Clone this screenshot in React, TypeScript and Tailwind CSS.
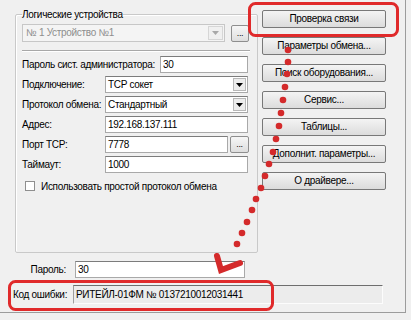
import React from 'react';

const dots: [number, number][] = [
  [288, 50], [288, 62], [287, 74], [285, 87], [283, 100], [281, 113], [279, 126],
  [276, 139], [273, 152], [269, 164], [265, 176], [261, 188], [256, 199], [252, 210],
  [247, 222], [242, 233], [237, 244],
];

const buttons = [
  'Проверка связи',
  'Параметры обмена...',
  'Поиск оборудования...',
  'Сервис...',
  'Таблицы...',
  'Дополнит. параметры...',
  'О драйвере...',
];

function Input({ value, className = '' }: { value: string; className?: string }) {
  return (
    <div
      className={`h-[17px] bg-white border border-[#a9a9a9] border-t-[#7c7c7c] pl-[2px] leading-[15px] ${className}`}
    >
      {value}
    </div>
  );
}

function Select({ value }: { value: string }) {
  return (
    <div className="h-[17px] w-[143px] bg-white border border-[#a9a9a9] border-t-[#7c7c7c] flex items-stretch">
      <span className="flex-1 pl-[2px] leading-[15px]">{value}</span>
      <span className="w-[13px] my-[1px] mr-[1px] bg-[#ececec] border border-[#b8b8b8] flex items-center justify-center">
        <svg width="7" height="4" viewBox="0 0 7 4">
          <path d="M0 0h7L3.5 4z" fill="#000" />
        </svg>
      </span>
    </div>
  );
}

function SmallButton({ className = '' }: { className?: string }) {
  return (
    <div
      className={`h-[17px] bg-gradient-to-b from-[#f6f6f6] to-[#dedede] border border-[#8e8e8e] rounded-[2px] flex items-end justify-center pb-[3px] text-[9px] leading-none ${className}`}
    >
      ...
    </div>
  );
}

function Row({ label, children }: { label: string; children: React.ReactNode }) {
  return (
    <div className="flex items-center h-[17px]">
      <span className="w-[83px] shrink-0">{label}</span>
      {children}
    </div>
  );
}

export default function App() {
  return (
    <div className="w-[411px] h-[320px] bg-[#f0f0f0] relative overflow-hidden text-[10px] tracking-[-0.3px] whitespace-nowrap text-black font-['Liberation_Sans',Arial,sans-serif]">
      <div className="w-[406px] h-[313px] border-r border-b border-[#9c9c9c] flex flex-col">
        <div className="flex items-start">
          <fieldset className="ml-[15px] mt-[8px] w-[243px] h-[245px] border border-[#c9c9c9] rounded-[2px] px-[6px] shadow-[inset_1px_1px_0_#fff]">
            <legend className="leading-[13px] px-0">Логические устройства</legend>
            <div className="flex items-center mt-[3px]">
              <div className="w-[203px] h-[18px] border border-[#c7c7c7] bg-[#f4f4f4] flex items-stretch text-[#8e8e8e]">
                <span className="flex-1 pl-[3px] leading-[16px]">№ 1 Устройство №1</span>
                <span className="w-[15px] my-[1px] mr-[1px] bg-[#f0f0f0] border border-[#d6d6d6] flex items-center justify-center">
                  <svg width="7" height="4" viewBox="0 0 7 4">
                    <path d="M0 0h7L3.5 4z" fill="#a8a8a8" />
                  </svg>
                </span>
              </div>
              <SmallButton className="w-[18px] ml-[6px]" />
            </div>
            <div className="mt-[8px] mr-[1px] h-[2px] border-t border-[#a8a8a8] border-b border-b-white" />
            <div className="flex flex-col gap-[3px] mt-[4px]">
              <div className="flex items-center h-[17px]">
                <span className="w-[138px] shrink-0">Пароль сист. администратора:</span>
                <Input value="30" className="w-[88px]" />
              </div>
              <Row label="Подключение:">
                <Select value="TCP сокет" />
              </Row>
              <Row label="Протокол обмена:">
                <Select value="Стандартный" />
              </Row>
              <Row label="Адрес:">
                <Input value="192.168.137.111" className="w-[143px]" />
              </Row>
              <Row label="Порт TCP:">
                <Input value="7778" className="w-[123px]" />
                <SmallButton className="w-[19px] ml-[2px]" />
              </Row>
              <Row label="Таймаут:">
                <Input value="1000" className="w-[143px]" />
              </Row>
              <div className="flex items-center h-[16px] mt-[2px]">
                <span className="w-[10px] h-[10px] ml-[3px] bg-white border border-[#8f8f8f]" />
                <span className="ml-[6px]">Использовать простой протокол обмена</span>
              </div>
            </div>
          </fieldset>
          <div className="ml-[4px] mt-[10px] w-[124px] flex flex-col gap-[9px]">
            {buttons.map((b) => (
              <div
                key={b}
                className="h-[18px] bg-gradient-to-b from-[#f4f4f4] to-[#dcdcdc] border border-[#787878] rounded-[2px] flex items-center justify-center leading-none"
              >
                {b}
              </div>
            ))}
          </div>
        </div>
        <div className="mt-[8px] flex items-center">
          <span className="w-[66px] text-right">Пароль:</span>
          <Input value="30" className="ml-[9px] w-[170px]" />
        </div>
        <div className="mt-[7px] flex items-center">
          <span className="ml-[13px] w-[60px]">Код ошибки:</span>
          <div className="w-[310px] h-[19px] bg-[#ececec] border border-[#fcfcfc] border-t-[#6e6e6e] border-l-[#9e9e9e] pl-[2px] leading-[17px]">
            РИТЕЙЛ-01ФМ № 0137210012031441
          </div>
        </div>
      </div>

      <svg className="absolute inset-0 pointer-events-none" width="411" height="320" viewBox="0 0 411 320">
        <rect x="249.5" y="3.5" width="148" height="32" rx="6" fill="none" stroke="#e02a2b" strokeWidth="3" />
        <rect x="9.5" y="281.5" width="263" height="28" rx="6" fill="none" stroke="#e02a2b" strokeWidth="3" />
        {dots.map(([x, y], i) => (
          <circle key={i} cx={x} cy={y} r="3.3" fill="#d42a2b" />
        ))}
        <path
          d="M217 256 L221 270 L240 263"
          fill="none"
          stroke="#d42a2b"
          strokeWidth="6"
          strokeLinejoin="miter"
          strokeLinecap="round"
        />
      </svg>
    </div>
  );
}
